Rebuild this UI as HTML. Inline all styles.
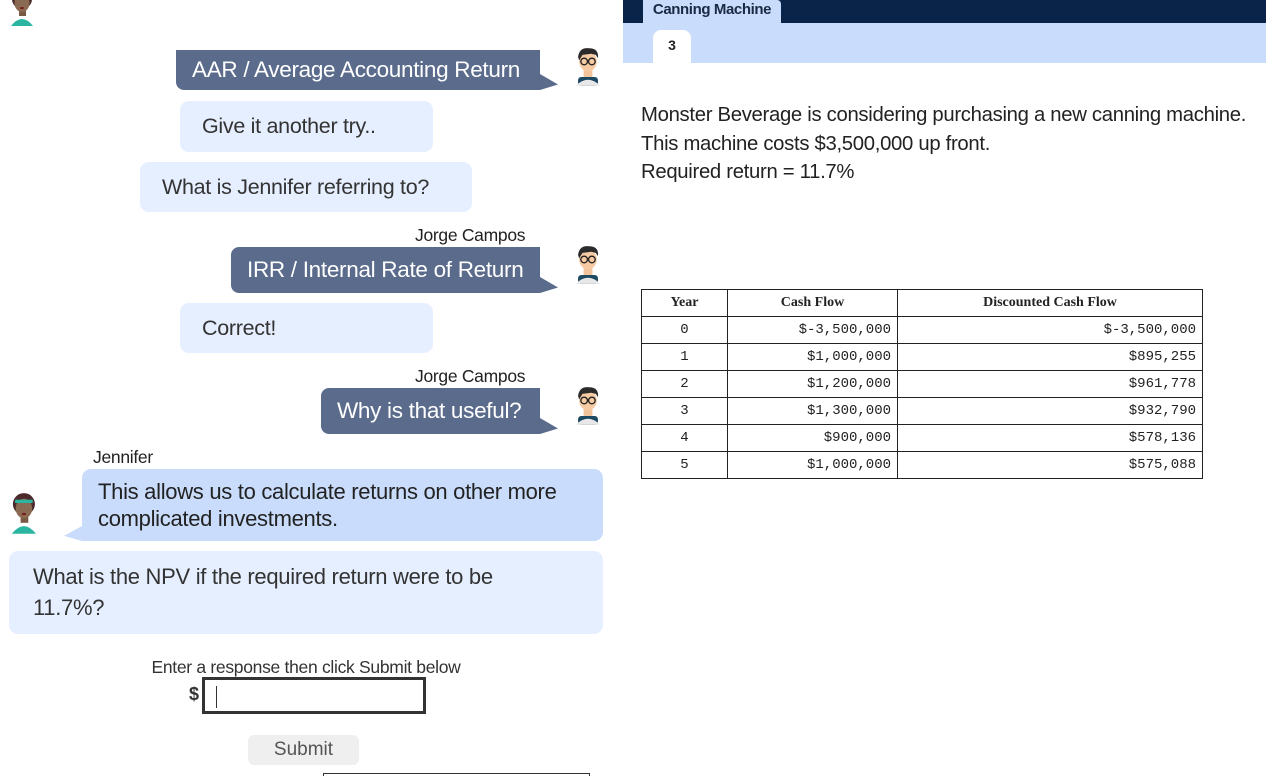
<!DOCTYPE html>
<html><head><meta charset="utf-8"><style>
*{margin:0;padding:0;box-sizing:border-box}
body{width:1266px;height:776px;overflow:hidden;background:#fff;font-family:"Liberation Sans",sans-serif;color:#222;position:relative}
.a{position:absolute}
.dk{background:#5a6b8c;color:#fff;font-size:22.5px;border-radius:8px 0 0 8px;padding-left:16px;display:flex;align-items:center;white-space:nowrap;letter-spacing:-0.3px}
.dk::after{content:"";position:absolute;right:-18px;bottom:0;width:18px;height:16px;background:#5a6b8c;clip-path:polygon(0 0,100% 66%,0 100%)}
.lt{background:#e6efff;border-radius:9px;font-size:21.5px;display:flex;align-items:center;padding-left:22px;color:#333;letter-spacing:-0.3px}
.nm{font-size:17.5px;color:#222;letter-spacing:-0.3px}
table{border-collapse:collapse;position:absolute;left:641px;top:289px;width:562px}
td,th{border:1px solid #222;height:27px;padding:0 6px}
th{font-family:"Liberation Serif",serif;font-size:14px;font-weight:bold}
td{font-family:"Liberation Mono",monospace;font-size:14px;text-align:right}
td:first-child{text-align:center}
</style></head><body>
<svg width="0" height="0" style="position:absolute"><defs>
<g id="jo"><rect x="8" y="28" width="18" height="8" fill="#1d4a63" rx="3"/><path d="M6 36 Q17 25 28 36Z" fill="#e8e8e8"/><rect x="13" y="20" width="8" height="8" fill="#f1c49b"/><ellipse cx="17" cy="14" rx="8" ry="9" fill="#f6cba3"/><path d="M8 10 Q9 1 18 2 Q27 2 26 11 L24 8 L20 7 L12 8 L9 13Z" fill="#2b2b2b"/><circle cx="13.5" cy="14" r="3" fill="none" stroke="#222" stroke-width="1.2"/><circle cx="20.5" cy="14" r="3" fill="none" stroke="#222" stroke-width="1.2"/></g>
<g id="je"><path d="M3 38 Q14 24 25 38Z" fill="#2bb5a0"/><rect x="11" y="22" width="7" height="6" fill="#7a5a44"/><circle cx="14" cy="11" r="10" fill="#4a2a2a"/><ellipse cx="14" cy="15" rx="7.5" ry="9" fill="#8a6a52"/><rect x="6" y="7" width="16" height="3" fill="#2bb5a0"/><ellipse cx="14" cy="20" rx="2" ry="1" fill="#7a1a1a"/></g>
</defs></svg>
<svg class="a" style="left:8px;top:-12px" width="30" height="40"><use href="#je"/></svg>

<div class="a dk" style="left:176px;top:50px;width:364px;height:40px;border-radius:0 0 0 8px">AAR / Average Accounting Return</div>
<svg class="a" style="left:568px;top:46px" width="40" height="42" viewBox="0 0 34 38"><use href="#jo"/></svg>
<div class="a lt" style="left:180px;top:101px;width:253px;height:51px">Give it another try..</div>
<div class="a lt" style="left:140px;top:162px;width:332px;height:50px">What is Jennifer referring to?</div>
<div class="a nm" style="left:415px;top:225px">Jorge Campos</div>
<div class="a dk" style="left:231px;top:247px;width:309px;height:46px">IRR / Internal Rate of Return</div>
<svg class="a" style="left:568px;top:244px" width="40" height="42" viewBox="0 0 34 38"><use href="#jo"/></svg>
<div class="a lt" style="left:180px;top:303px;width:253px;height:50px">Correct!</div>
<div class="a nm" style="left:415px;top:366px">Jorge Campos</div>
<div class="a dk" style="left:321px;top:388px;width:219px;height:46px">Why is that useful?</div>
<svg class="a" style="left:568px;top:385px" width="40" height="42" viewBox="0 0 34 38"><use href="#jo"/></svg>
<div class="a nm" style="left:93px;top:447px">Jennifer</div>
<div class="a" style="left:82px;top:469px;width:521px;height:72px;background:#c9dcfb;border-radius:9px 9px 9px 0;font-size:22px;padding:9px 16px;line-height:27px;letter-spacing:-0.3px">This allows us to calculate returns on other more complicated investments.</div>
<div class="a" style="left:64px;top:526px;width:18px;height:15px;background:#c9dcfb;clip-path:polygon(100% 0,0 66%,100% 100%)"></div>
<svg class="a" style="left:8px;top:492px" width="34" height="44" viewBox="0 0 30 40"><use href="#je"/></svg>
<div class="a" style="left:9px;top:551px;width:594px;height:83px;background:#e6efff;border-radius:9px;font-size:22px;padding:10px 80px 10px 24px;line-height:31px;color:#333;letter-spacing:-0.3px">What is the NPV if the required return were to be 11.7%?</div>
<div class="a nm" style="left:0;width:612px;text-align:center;top:657px;color:#333">Enter a response then click Submit below</div>
<div class="a" style="left:189px;top:684px;font-size:18px;font-weight:bold;color:#333">$</div>
<div class="a" style="left:202px;top:677px;width:224px;height:37px;border:3px solid #333"><div style="position:absolute;left:11px;top:6px;width:1px;height:22px;background:#333"></div></div>
<div class="a" style="left:248px;top:735px;width:111px;height:30px;background:#efefef;border-radius:6px;color:#555;font-size:19px;text-align:center;line-height:30px">Submit</div>
<div class="a" style="left:323px;top:773px;width:267px;height:3px;border:1px solid #333;border-bottom:0"></div>

<div class="a" style="left:623px;top:0;width:643px;height:23px;background:#0a2348"></div>
<div class="a" style="left:623px;top:23px;width:643px;height:40px;background:#c9dcfb"></div>
<div class="a" style="left:643px;top:0;width:138px;height:23px;background:#c9dcfb;border-radius:0 4px 0 0;font-size:15px;font-weight:bold;color:#1a2a44;text-align:center;line-height:20px;letter-spacing:-0.4px">Canning Machine</div>
<div class="a" style="left:653px;top:30px;width:38px;height:33px;background:#fff;border-radius:8px 8px 0 0;font-size:14px;font-weight:bold;text-align:center;line-height:30px">3</div>
<div class="a" style="left:641px;top:101px;font-size:20.3px;line-height:28.5px;color:#222;letter-spacing:-0.3px">Monster Beverage is considering purchasing a new canning machine.<br>This machine costs $3,500,000 up front.<br>Required return = 11.7%</div>
<table>
<tr><th style="width:86px">Year</th><th style="width:170px">Cash Flow</th><th>Discounted Cash Flow</th></tr>
<tr><td>0</td><td>$-3,500,000</td><td>$-3,500,000</td></tr>
<tr><td>1</td><td>$1,000,000</td><td>$895,255</td></tr>
<tr><td>2</td><td>$1,200,000</td><td>$961,778</td></tr>
<tr><td>3</td><td>$1,300,000</td><td>$932,790</td></tr>
<tr><td>4</td><td>$900,000</td><td>$578,136</td></tr>
<tr><td>5</td><td>$1,000,000</td><td>$575,088</td></tr>
</table>
</body></html>
